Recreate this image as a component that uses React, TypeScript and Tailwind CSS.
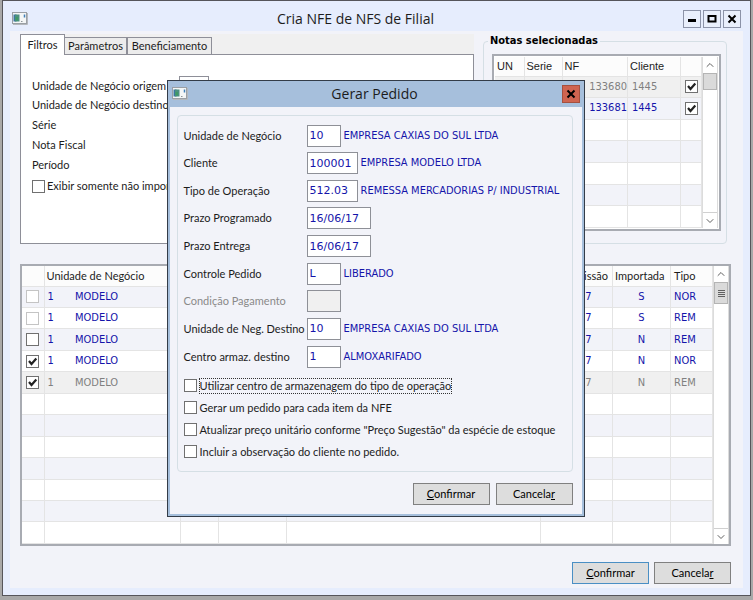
import React, { useState } from 'react';
import { ChevronDown, ChevronUp } from 'lucide-react';
import clsx from 'clsx';

interface NotaRow {
  sel: boolean;
  locked?: boolean;
  un: string;
  nome: string;
  emissao: string;
  importada: string;
  tipo: string;
  current?: boolean;
}

const notas: NotaRow[] = [
  { sel: false, locked: true, un: '1', nome: 'MODELO', emissao: '16/06/17', importada: 'S', tipo: 'NOR' },
  { sel: false, locked: true, un: '1', nome: 'MODELO', emissao: '16/06/17', importada: 'S', tipo: 'REM' },
  { sel: false, un: '1', nome: 'MODELO', emissao: '16/06/17', importada: 'N', tipo: 'REM' },
  { sel: true, un: '1', nome: 'MODELO', emissao: '16/06/17', importada: 'N', tipo: 'NOR' },
  { sel: true, un: '1', nome: 'MODELO', emissao: '16/06/17', importada: 'N', tipo: 'REM', current: true },
];

const selecionadas = [
  { nf: '133680', cliente: '1445', current: true },
  { nf: '133681', cliente: '1445', current: false },
];

const filtros = [
  { id: 'origem', label: 'Unidade de Negócio origem' },
  { id: 'destino', label: 'Unidade de Negócio destino' },
  { id: 'serie', label: 'Série' },
  { id: 'nota', label: 'Nota Fiscal' },
  { id: 'periodo', label: 'Período' },
];

const campos = [
  { id: 'un', label: 'Unidade de Negócio', value: '10', width: 'w-[34px]', desc: 'EMPRESA CAXIAS DO SUL LTDA' },
  { id: 'cliente', label: 'Cliente', value: '100001', width: 'w-[51px]', desc: 'EMPRESA MODELO LTDA' },
  { id: 'operacao', label: 'Tipo de Operação', value: '512.03', width: 'w-[51px]', desc: 'REMESSA MERCADORIAS P/ INDUSTRIAL' },
  { id: 'programado', label: 'Prazo Programado', value: '16/06/17', width: 'w-16', desc: '' },
  { id: 'entrega', label: 'Prazo Entrega', value: '16/06/17', width: 'w-16', desc: '' },
  { id: 'controle', label: 'Controle Pedido', value: 'L', width: 'w-[34px]', desc: 'LIBERADO' },
  { id: 'condicao', label: 'Condição Pagamento', value: '', width: 'w-[34px]', desc: '', disabled: true },
  { id: 'unDestino', label: 'Unidade de Neg. Destino', value: '10', width: 'w-[34px]', desc: 'EMPRESA CAXIAS DO SUL LTDA' },
  { id: 'centro', label: 'Centro armaz. destino', value: '1', width: 'w-[34px]', desc: 'ALMOXARIFADO' },
];

const opcoes = [
  'Utilizar centro de armazenagem do tipo de operação',
  'Gerar um pedido para cada item da NFE',
  'Atualizar preço unitário conforme "Preço Sugestão" da espécie de estoque',
  'Incluir a observação do cliente no pedido.',
];

const dataFont = "font-['DejaVu_Sans_Condensed','DejaVu_Sans',sans-serif]";
const headFont = "font-['Liberation_Sans',sans-serif]";

const AppIcon: React.FC = () => (
  <svg width="16" height="13" viewBox="0 0 16 13" className="shrink-0">
    <rect x="0.5" y="0.5" width="14" height="11" fill="#f4f6f6" stroke="#9a9fa5" />
    <path d="M1 12.5h14.5V1" fill="none" stroke="#b4b8bc" />
    <path d="M1.500 2.500h3v7h-3z" fill="#3d75a0" />
    <path d="M3 2.500h4.500v7H3z" fill="#4c9080" />
    <path d="M3.500 5h2.500v3.500H3.500z" fill="#3f9a64" />
    <path d="M9 9.500h1.500" stroke="#8d9499" />
    <path d="M12.500 2.500v3" stroke="#3f7fb8" strokeWidth="1.500" />
  </svg>
);

const Tick: React.FC<React.InputHTMLAttributes<HTMLInputElement>> = props => (
  <span className="relative inline-block size-[13px] shrink-0 align-middle">
    <input
      type="checkbox"
      className="peer block size-[13px] appearance-none border border-[#707070] bg-white outline-none disabled:border-[#c4c4c4]"
      {...props}
    />
    <svg viewBox="0 0 13 13" className="pointer-events-none absolute inset-0 hidden size-[13px] peer-checked:block">
      <path d="M3 6l2.500 3L10.300 3.500" fill="none" stroke="#222" strokeWidth="2.200" />
    </svg>
  </span>
);

const PushButton: React.FC<{ primary?: boolean; onClick?: () => void; children: React.ReactNode }> = ({ primary, onClick, children }) => (
  <button
    type="button"
    onClick={onClick}
    className={clsx('h-[22px] w-[77px] border bg-[#dddddd] text-black', primary ? 'border-[#4a8fc4]' : 'border-[#808080]')}
  >
    {children}
  </button>
);

const ScrollBar: React.FC<{ grip?: boolean }> = ({ grip }) => (
  <div className="flex w-4 shrink-0 flex-col border-x border-[#dcdcdc] bg-white">
    <button type="button" aria-label="Subir" className="flex h-4 items-center justify-center text-[#606060]">
      <ChevronUp className="size-3" />
    </button>
    <div className={clsx('flex flex-col items-center justify-center gap-px border border-[#b4b4b4] bg-[#dadada]', grip ? 'h-[22px]' : 'h-[17px]')}>
      {grip && [0, 1, 2, 3].map(i => <span key={i} className="h-px w-[7px] bg-[#606060]" />)}
    </div>
    <button type="button" aria-label="Descer" className="mt-auto flex h-4 items-center justify-center border-t border-[#d0d0d0] text-[#606060]">
      <ChevronDown className="size-3" />
    </button>
  </div>
);

const Filtros: React.FC = () => (
  <div className="flex min-w-0 flex-1 flex-col">
    <div role="tablist" className="flex h-5 items-end bg-[#f0f0f0]">
      <button role="tab" aria-selected="true" type="button" className="relative -mb-px h-[21px] w-[45px] border border-b-0 border-[#8e8f98] bg-white">
        Filtros
      </button>
      <button role="tab" type="button" className="h-[17px] w-[62px] border border-b-0 border-l-0 border-[#8e8f98] bg-[#ececec]">
        Parâmetros
      </button>
      <button role="tab" type="button" className="h-[17px] w-[85px] border border-b-0 border-[#8e8f98] bg-[#ececec]">
        Beneficiamento
      </button>
    </div>
    <div className="flex-1 border border-[#8e8f98] bg-white pt-[21px] pl-[11px]">
      <div className="grid h-[98px] content-between">
        {filtros.map(f => (
          <div key={f.id} className="flex h-[19px] items-center">
            <label htmlFor={f.id} className="w-[147px] whitespace-nowrap">{f.label}</label>
            <input id={f.id} type="text" className="h-[19px] w-[30px] border border-[#8e8f98] bg-white px-1" />
          </div>
        ))}
      </div>
      <label className="mt-[5px] flex h-[14px] items-center gap-[2px] whitespace-nowrap">
        <Tick />
        Exibir somente não impor
      </label>
    </div>
  </div>
);

const NotasSelecionadas: React.FC = () => (
  <fieldset className="w-[244px] shrink-0 rounded-sm border border-[#d5dfe5] pt-[6px] pr-[5px] pb-3 pl-2">
    <legend className={clsx('-ml-1 px-[2px] font-bold text-black', dataFont)}>Notas selecionadas</legend>
    <div className="flex h-[177px] border-2 border-[#a8abb2] bg-white p-px">
      <table className="h-full flex-1 table-fixed border-collapse">
        <colgroup>
          <col className="w-[29px]" />
          <col className="w-[38px]" />
          <col />
          <col className="w-[53px]" />
          <col className="w-[21px]" />
        </colgroup>
        <thead className={headFont}>
          <tr className="h-[19px] text-left">
            {['UN', 'Serie', 'NF', 'Cliente', ''].map((h, i) => (
              <th key={i} className="border-r border-b border-[#e4e4e4] bg-[#fcfcfc] p-0 pl-[2px] font-normal">{h}</th>
            ))}
          </tr>
        </thead>
        <tbody className={dataFont}>
          {Array.from({ length: 7 }, (_, i) => {
            const row = selecionadas[i];
            return (
              <tr
                key={i}
                className={clsx(
                  'h-[21px]',
                  row?.current ? 'bg-[#f0f0f0] text-[#808080]' : 'text-[#1414aa]',
                  !row?.current && (i % 2 ? 'bg-[#f2f3f9]' : 'bg-white')
                )}
              >
                <td className="border-r border-b border-[#e4e4e4]" />
                <td className="border-r border-b border-[#e4e4e4]" />
                <td className="border-r border-b border-[#e4e4e4] p-0 text-right">{row?.nf}</td>
                <td className="border-r border-b border-[#e4e4e4] p-0 pl-1">{row?.cliente}</td>
                <td className="border-r border-b border-[#e4e4e4] p-0 text-center leading-none">
                  {row && <Tick defaultChecked aria-label={`Nota ${row.nf}`} />}
                </td>
              </tr>
            );
          })}
        </tbody>
      </table>
      <ScrollBar />
    </div>
  </fieldset>
);

const NotasTable: React.FC = () => {
  const cell = 'border-r border-b border-[#e4e4e4] p-0';
  return (
    <div className="mt-5 flex min-h-[282px] flex-1 border-2 border-[#a8abb2] bg-white">
      <table className="h-full flex-1 table-fixed border-collapse">
        <colgroup>
          <col className="w-[22px]" />
          <col className="w-7" />
          <col className="w-[108px]" />
          <col className="w-[38px]" />
          <col className="w-[68px]" />
          <col />
          <col className="w-[72px]" />
          <col className="w-[58px]" />
          <col className="w-[42px]" />
        </colgroup>
        <thead>
          <tr className="h-5 text-left">
            <th className={clsx(cell, 'bg-[#fcfcfc]')} />
            <th colSpan={2} className={clsx(cell, 'bg-[#fcfcfc] pl-[2px] font-normal')}>Unidade de Negócio</th>
            <th className={clsx(cell, 'bg-[#fcfcfc]')} />
            <th className={clsx(cell, 'bg-[#fcfcfc]')} />
            <th className={clsx(cell, 'bg-[#fcfcfc]')} />
            <th className={clsx(cell, 'bg-[#fcfcfc] pr-1 text-right font-normal')}>Emissão</th>
            <th className={clsx(cell, 'bg-[#fcfcfc] pl-[2px] font-normal')}>Importada</th>
            <th className={clsx(cell, 'bg-[#fcfcfc] pl-[3px] font-normal')}>Tipo</th>
          </tr>
        </thead>
        <tbody className={dataFont}>
          {Array.from({ length: 12 }, (_, i) => {
            const row = notas[i];
            return (
              <tr
                key={i}
                className={clsx(
                  'h-[21px]',
                  row?.current ? 'bg-[#f0f0f0] text-[#808080]' : 'text-[#1414aa]',
                  !row?.current && (i % 2 ? 'bg-white' : 'bg-[#f2f3f9]')
                )}
              >
                <td className={clsx(cell, 'text-center leading-none')}>
                  {row && <Tick defaultChecked={row.sel} disabled={row.locked} aria-label={`Selecionar linha ${i + 1}`} />}
                </td>
                <td className="border-b border-[#e4e4e4] p-0 pl-[3px]">{row?.un}</td>
                <td className={clsx(cell, 'pl-[3px]')}>{row?.nome}</td>
                <td className={cell} />
                <td className={cell} />
                <td className={cell} />
                <td className={clsx(cell, 'pl-[6px]')}>{row?.emissao}</td>
                <td className={clsx(cell, 'text-center')}>{row?.importada}</td>
                <td className={clsx(cell, 'pl-[3px]')}>{row?.tipo}</td>
              </tr>
            );
          })}
        </tbody>
      </table>
      <ScrollBar grip />
    </div>
  );
};

const GerarPedido: React.FC<{ onClose: () => void }> = ({ onClose }) => (
  <div className="absolute inset-0 flex items-center justify-center pr-[2px]">
    <div role="dialog" aria-label="Gerar Pedido" className="w-[418px] border border-[#333c48] bg-[#a6bfdc] px-[2px] pb-[2px]">
      <div className="flex h-[26px] items-center px-[2px]">
        <AppIcon />
        <h2 className="flex-1 text-center font-['Open_Sans',sans-serif] text-sm">Gerar Pedido</h2>
        <button type="button" aria-label="Fechar" onClick={onClose} className="flex size-[18px] items-center justify-center border border-[#a5503f] bg-[#cf6450]">
          <svg width="10" height="10" viewBox="0 0 10 10">
            <path d="M1.500 1.500l7 7M8.500 1.500l-7 7" stroke="#000" strokeWidth="2" />
          </svg>
        </button>
      </div>
      <div className="bg-[#f2f3f9] pt-2 pr-[9px] pb-[9px] pl-[7px]">
        <div className="rounded-sm border border-[#d5dfe5] px-[6px] pt-[9px] pb-3">
          <div className="grid h-[243px] content-between">
            {campos.map(c => (
              <div key={c.id} className="flex h-[22px] items-center">
                <label htmlFor={c.id} className={clsx('w-[123px] whitespace-nowrap', c.disabled && 'text-[#8a8a8a]')}>
                  {c.label}
                </label>
                <input
                  id={c.id}
                  type="text"
                  defaultValue={c.value}
                  disabled={c.disabled}
                  className={clsx(
                    "h-[22px] border border-[#8e9097] bg-white px-[2px] font-['DejaVu_Sans',sans-serif] text-[#1414aa] outline-none disabled:bg-[#f0f0f0]",
                    c.width
                  )}
                />
                <span className={clsx('ml-[3px] whitespace-nowrap text-[#1414aa]', dataFont)}>{c.desc}</span>
              </div>
            ))}
          </div>
          <div className="mt-[11px] grid h-[80px] content-between">
            {opcoes.map((o, i) => (
              <label key={o} className="flex h-[14px] items-center gap-[3px] whitespace-nowrap">
                <Tick />
                <span className={clsx(i === 0 && 'outline outline-dotted outline-[#333]')}>{o}</span>
              </label>
            ))}
          </div>
        </div>
        <div className="mt-[11px] flex justify-end gap-[6px]">
          <PushButton><u>C</u>onfirmar</PushButton>
          <PushButton onClick={onClose}>Cancela<u>r</u></PushButton>
        </div>
      </div>
    </div>
  </div>
);

const App: React.FC = () => {
  const [open, setOpen] = useState(true);
  const winButton = 'flex size-[18px] items-center justify-center border border-[#8c93a8] bg-[#e9effc]';

  return (
    <div className="flex min-h-screen bg-[#a8a8a8] px-[2px] pb-1 font-['Lato',sans-serif] text-[11px] leading-[14px] text-[#1c1c1c]">
      <div className="relative flex min-w-0 flex-1 flex-col border border-[#55555a] bg-[#e6edfd] px-[7px] pb-[7px]">
        {/* Title bar */}
        <header className="flex h-[30px] items-center gap-[2px] px-[2px] pt-[5px]">
          <AppIcon />
          <h1 className="flex-1 text-center font-['Open_Sans',sans-serif] text-sm">Cria NFE de NFS de Filial</h1>
          <button type="button" aria-label="Minimizar" className={winButton}>
            <svg width="10" height="10" viewBox="0 0 10 10"><path d="M1 6.500h8" stroke="#000" strokeWidth="3" /></svg>
          </button>
          <button type="button" aria-label="Maximizar" className={winButton}>
            <svg width="10" height="10" viewBox="0 0 10 10"><rect x="1.500" y="2" width="7" height="5.500" fill="none" stroke="#000" strokeWidth="2" /></svg>
          </button>
          <button type="button" aria-label="Fechar janela" className={winButton}>
            <svg width="10" height="10" viewBox="0 0 10 10"><path d="M1.500 1.500l7 7M8.500 1.500l-7 7" stroke="#000" strokeWidth="2" /></svg>
          </button>
        </header>

        <main className="flex flex-1 flex-col bg-[#f2f3f9] pt-[3px] pr-3 pb-1 pl-[10px]">
          <div className="mr-1 flex gap-[9px]">
            <Filtros />
            <NotasSelecionadas />
          </div>
          <NotasTable />
          <div className="mt-4 flex justify-end gap-[5px]">
            <PushButton primary onClick={() => setOpen(true)}><u>C</u>onfirmar</PushButton>
            <PushButton>Cancela<u>r</u></PushButton>
          </div>
        </main>

        {open && <GerarPedido onClose={() => setOpen(false)} />}
      </div>
    </div>
  );
};

export default App;
